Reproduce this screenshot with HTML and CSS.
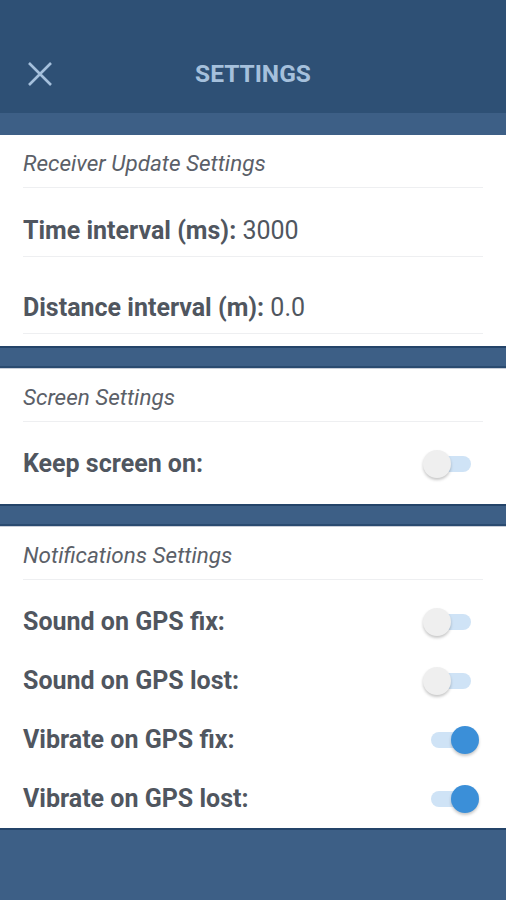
FILE: index.html
```html
<!DOCTYPE html>
<html>
<head>
<meta charset="utf-8">
<link rel="stylesheet" href="styles.css">
</head>
<body>
<div class="app">
  <header class="topbar">
    <svg class="close" width="24" height="24" viewBox="0 0 24 24"><path d="M1 1 L23 23 M23 1 L1 23" stroke="#a5c0dc" stroke-width="2.6" fill="none"/></svg>
    <h1 class="title">SETTINGS</h1>
  </header>
  <div class="band band-top"></div>

  <section class="card">
    <div class="card-head">Receiver Update Settings</div>
    <div class="field field-a"><b>Time interval (ms):</b>&nbsp;3000</div>
    <div class="field field-b"><b>Distance interval (m):</b>&nbsp;0.0</div>
    <div class="card-end"></div>
  </section>

  <div class="band"></div>

  <section class="card">
    <div class="card-head">Screen Settings</div>
    <div class="toggles">
      <div class="trow"><b>Keep screen on:</b><span class="switch"><span class="track"></span><span class="thumb"></span></span></div>
    </div>
  </section>

  <div class="band"></div>

  <section class="card">
    <div class="card-head">Notifications Settings</div>
    <div class="toggles toggles-last">
      <div class="trow"><b>Sound on GPS fix:</b><span class="switch"><span class="track"></span><span class="thumb"></span></span></div>
      <div class="trow"><b>Sound on GPS lost:</b><span class="switch"><span class="track"></span><span class="thumb"></span></span></div>
      <div class="trow"><b>Vibrate on GPS fix:</b><span class="switch on"><span class="track"></span><span class="thumb"></span></span></div>
      <div class="trow"><b>Vibrate on GPS lost:</b><span class="switch on"><span class="track"></span><span class="thumb"></span></span></div>
    </div>
  </section>

  <div class="band band-bottom"></div>
</div>
</body>
</html>
```

FILE: styles.css
```css
* { box-sizing: border-box; }
html, body { margin: 0; padding: 0; }
body {
  width: 506px;
  height: 900px;
  overflow: hidden;
  background: #3d5f86;
  font-family: Roboto, "Liberation Sans", sans-serif;
}
.app { display: flex; flex-direction: column; height: 900px; }

.topbar {
  height: 113px;
  background: #2e5075;
  display: flex;
  align-items: center;
  padding: 35px 0 0 28px;
  position: relative;
}
.close { display: block; }
.title {
  margin: 0;
  position: absolute;
  left: 0; right: 0;
  top: 59px;
  text-align: center;
  font-size: 24.5px;
  font-weight: 700;
  color: #a5c0dc;
  line-height: 30px;
}

.band { height: 22px; background: #3d5f86; border-top: 2px solid #244469; border-bottom: 2px solid #2a4b70; }
.band-top { height: 22px; border: 0; background: #3d5f86; }
.band-bottom { flex: 1; border-bottom: 0; }

.card {
  background: #fff;
  padding: 0 23px;
  border-top: 1px solid #c9ced8;
}
.band-top + .card { border-top: 0; }

.card-head {
  height: 53px;
  padding-top: 14px;
  font-size: 22.5px;
  line-height: 28px;
  font-style: italic;
  color: #5b6068;
  border-bottom: 1px solid #eeeff1;
}

.field {
  display: flex;
  align-items: flex-end;
  font-size: 25px;
  line-height: 30px;
  color: #50565f;
  border-bottom: 1px solid #eeeff1;
  padding-bottom: 10px;
}
.field b { font-weight: 700; }
.field-a { height: 69px; }
.field-b { height: 77px; }
.card-end { height: 12px; }

.toggles { padding: 12px 0 11px; }
.toggles-last { padding-bottom: 0; }
.trow {
  height: 59px;
  display: flex;
  align-items: center;
  justify-content: space-between;
  font-size: 25px;
  color: #50565f;
}
.trow b { font-weight: 700; }

.switch {
  position: relative;
  width: 56px;
  height: 28px;
  margin-right: 4px;
}
.track {
  position: absolute;
  left: 8px; right: 8px;
  top: 6px;
  height: 16px;
  border-radius: 8px;
  background: #cfe3f6;
}
.thumb {
  position: absolute;
  left: 0;
  top: 0;
  width: 28px;
  height: 28px;
  border-radius: 50%;
  background: #efefef;
  box-shadow: 0 2px 3px rgba(0,0,0,0.22);
}
.switch.on .thumb { left: 28px; background: #3b8fd8; }
```
